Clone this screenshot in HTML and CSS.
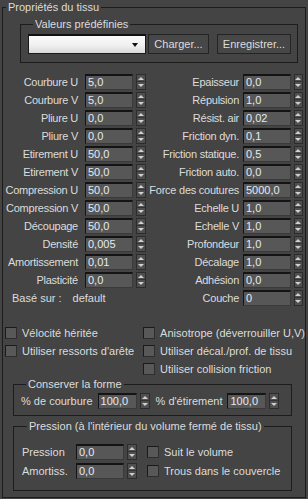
FILE: index.html
```html
<!DOCTYPE html>
<html lang="fr">
  <head>
    <meta charset="UTF-8" />
    <title>Propriétés du tissu</title>
    <link rel="stylesheet" href="styles.css">
  </head>
  <body>
    <fieldset class="group rollout">
      <legend>Propriétés du tissu</legend>

      <fieldset class="group presets">
        <legend>Valeurs prédéfinies</legend>
        <div class="preset-row">
          <div class="dropdown"><span class="drop-arrow"></span></div>
          <button class="btn btn-load">Charger...</button>
          <button class="btn btn-save">Enregistrer...</button>
        </div>
      </fieldset>

      <div class="params">
        <div class="param-col col-left">
          <div class="row"><span class="lbl">Courbure U</span><span class="field">5,0</span><span class="spin"></span></div>
          <div class="row"><span class="lbl">Courbure V</span><span class="field">5,0</span><span class="spin"></span></div>
          <div class="row"><span class="lbl">Pliure U</span><span class="field">0,0</span><span class="spin"></span></div>
          <div class="row"><span class="lbl">Pliure V</span><span class="field">0,0</span><span class="spin"></span></div>
          <div class="row"><span class="lbl">Etirement U</span><span class="field">50,0</span><span class="spin"></span></div>
          <div class="row"><span class="lbl">Etirement V</span><span class="field">50,0</span><span class="spin"></span></div>
          <div class="row"><span class="lbl">Compression U</span><span class="field">50,0</span><span class="spin"></span></div>
          <div class="row"><span class="lbl">Compression V</span><span class="field">50,0</span><span class="spin"></span></div>
          <div class="row"><span class="lbl">Découpage</span><span class="field">50,0</span><span class="spin"></span></div>
          <div class="row"><span class="lbl">Densité</span><span class="field">0,005</span><span class="spin"></span></div>
          <div class="row"><span class="lbl">Amortissement</span><span class="field">0,01</span><span class="spin"></span></div>
          <div class="row"><span class="lbl">Plasticité</span><span class="field">0,0</span><span class="spin"></span></div>
          <div class="row based"><span class="based-lbl">Basé sur :</span><span class="based-val">default</span></div>
        </div>
        <div class="param-col col-right">
          <div class="row"><span class="lbl">Epaisseur</span><span class="field">0,0</span><span class="spin"></span></div>
          <div class="row"><span class="lbl">Répulsion</span><span class="field">1,0</span><span class="spin"></span></div>
          <div class="row"><span class="lbl">Résist. air</span><span class="field">0,02</span><span class="spin"></span></div>
          <div class="row"><span class="lbl">Friction dyn.</span><span class="field">0,1</span><span class="spin"></span></div>
          <div class="row"><span class="lbl">Friction statique.</span><span class="field">0,5</span><span class="spin"></span></div>
          <div class="row"><span class="lbl">Friction auto.</span><span class="field">0,0</span><span class="spin"></span></div>
          <div class="row"><span class="lbl">Force des coutures</span><span class="field">5000,0</span><span class="spin"></span></div>
          <div class="row"><span class="lbl">Echelle U</span><span class="field">1,0</span><span class="spin"></span></div>
          <div class="row"><span class="lbl">Echelle V</span><span class="field">1,0</span><span class="spin"></span></div>
          <div class="row"><span class="lbl">Profondeur</span><span class="field">1,0</span><span class="spin"></span></div>
          <div class="row"><span class="lbl">Décalage</span><span class="field">1,0</span><span class="spin"></span></div>
          <div class="row"><span class="lbl">Adhésion</span><span class="field">0,0</span><span class="spin"></span></div>
          <div class="row"><span class="lbl">Couche</span><span class="field">0</span><span class="spin"></span></div>
        </div>
      </div>

      <div class="checks">
        <div class="check-col col-left">
          <div class="check"><span class="box"></span>Vélocité héritée</div>
          <div class="check"><span class="box"></span>Utiliser ressorts d'arête</div>
        </div>
        <div class="check-col col-right">
          <div class="check"><span class="box"></span>Anisotrope (déverrouiller U,V)</div>
          <div class="check"><span class="box"></span>Utiliser décal./prof. de tissu</div>
          <div class="check"><span class="box"></span>Utiliser collision friction</div>
        </div>
      </div>

      <fieldset class="group shape">
        <legend>Conserver la forme</legend>
        <div class="shape-row">
          <span class="shape-lbl">% de courbure</span>
          <span class="field narrow">100,0</span><span class="spin"></span>
          <span class="shape-lbl second">% d'étirement</span>
          <span class="field narrow">100,0</span><span class="spin"></span>
        </div>
      </fieldset>

      <fieldset class="group pressure">
        <legend>Pression (à l'intérieur du volume fermé de tissu)</legend>
        <div class="press-row">
          <span class="press-lbl">Pression</span>
          <span class="field">0,0</span><span class="spin"></span>
          <div class="check"><span class="box"></span>Suit le volume</div>
        </div>
        <div class="press-row">
          <span class="press-lbl">Amortiss.</span>
          <span class="field">0,0</span><span class="spin"></span>
          <div class="check"><span class="box"></span>Trous dans le couvercle</div>
        </div>
      </fieldset>
    </fieldset>
  </body>
</html>
```

FILE: styles.css
```css
body {
  margin: 0;
  background-color: #444444;
  font-family: "Liberation Sans", Arial, sans-serif;
  font-size: 11px;
  color: #dcdcdc;
}
.group {
  border: 1px solid #1c1c1c;
  margin: 0;
  padding: 0;
  min-width: 0;
}
legend {
  padding: 0 2px;
  line-height: 14px;
  margin-left: 5px;
}
.rollout {
  margin: 0 2px;
  height: 498px;
  box-sizing: border-box;
}
.rollout > legend {
  margin-left: 3px;
}

/* presets */
.presets {
  margin: 3px 7px 0 17px;
  padding: 3px 6px 8px 7px;
}
.preset-row {
  display: flex;
  height: 20px;
}
.dropdown {
  width: 118px;
  box-sizing: border-box;
  border: 1px solid #1a1a1a;
  border-top: 2px solid #111;
  background: linear-gradient(#fbfbfb, #f0f0f0 55%, #d9d9d9);
  position: relative;
}
.drop-arrow {
  position: absolute;
  right: 7px;
  top: 7px;
  border-left: 3px solid transparent;
  border-right: 3px solid transparent;
  border-top: 4px solid #111;
}
.btn {
  font-family: inherit;
  font-size: 11px;
  color: #dcdcdc;
  background-color: #474747;
  border: 1px solid #242424;
  padding: 0;
  height: 20px;
}
.btn-load {
  margin-left: 2px;
  width: 61px;
}
.btn-save {
  margin-left: 8px;
  width: 74px;
}

/* parameter columns */
.params {
  display: flex;
  margin-top: 11px;
}
.param-col {
  display: flex;
  flex-direction: column;
  gap: 2px;
}
.param-col.col-left {
  width: 143px;
}
.row {
  display: flex;
  height: 16px;
  line-height: 16px;
}
.lbl {
  text-align: right;
  white-space: nowrap;
  letter-spacing: -0.25px;
}
.col-left .lbl {
  width: 75px;
}
.col-right .lbl {
  width: 93px;
}
.field {
  box-sizing: border-box;
  width: 48px;
  height: 16px;
  line-height: 13px;
  padding-left: 2px;
  background-color: #575757;
  border-top: 2px solid #141414;
  border-left: 1px solid #141414;
  border-right: 1px solid #3a3a3a;
  border-bottom: 1px solid #3a3a3a;
  color: #e4eaf2;
}
.col-left .field {
  margin-left: 7px;
}
.col-right .field {
  margin-left: 4px;
}
.spin {
  position: relative;
  box-sizing: border-box;
  width: 10px;
  height: 16px;
  margin-left: 3px;
  border: 1px solid #2c2c2c;
  background: linear-gradient(#4f4f4f 0 6px, #333 6px 7px, #4f4f4f 7px);
}
.col-right .spin {
  width: 9px;
}
.spin::before,
.spin::after {
  content: "";
  position: absolute;
  left: 1px;
  border-left: 3px solid transparent;
  border-right: 3px solid transparent;
}
.spin::before {
  top: 2px;
  border-bottom: 3px solid #d0d0d0;
}
.spin::after {
  bottom: 2px;
  border-top: 3px solid #d0d0d0;
}
.col-right .spin::before,
.col-right .spin::after {
  left: 0;
}
.based-lbl {
  margin-left: 9px;
}
.based-val {
  margin-left: 11px;
}

/* checkboxes */
.checks {
  display: flex;
  margin-top: 19px;
}
.check-col {
  display: flex;
  flex-direction: column;
  gap: 2px;
}
.check-col.col-left {
  width: 140px;
  padding-left: 2px;
}
.check {
  display: flex;
  align-items: center;
  height: 16px;
  white-space: nowrap;
}
.box {
  box-sizing: border-box;
  width: 12px;
  height: 12px;
  margin-right: 5px;
  background-color: #585858;
  border-top: 1px solid #1a1a1a;
  border-left: 1px solid #1a1a1a;
  border-right: 1px solid #2e2e2e;
  border-bottom: 1px solid #2e2e2e;
}

/* shape group */
.shape {
  margin: 0 13px 0 10px;
  padding: 2px 0 6px 7px;
}
.shape-row {
  display: flex;
  align-items: center;
  height: 16px;
}
.field.narrow {
  width: 39px;
  margin-left: 5px;
}
.shape-lbl.second {
  margin-left: 6px;
}

/* pressure group */
.pressure {
  margin: 3px 13px 0 10px;
  padding: 11px 0 11px 8px;
}
.press-row {
  display: flex;
  align-items: center;
  height: 16px;
}
.press-row + .press-row {
  margin-top: 3px;
}
.press-lbl {
  width: 54px;
}
.press-row .check {
  margin-left: 10px;
}
```
